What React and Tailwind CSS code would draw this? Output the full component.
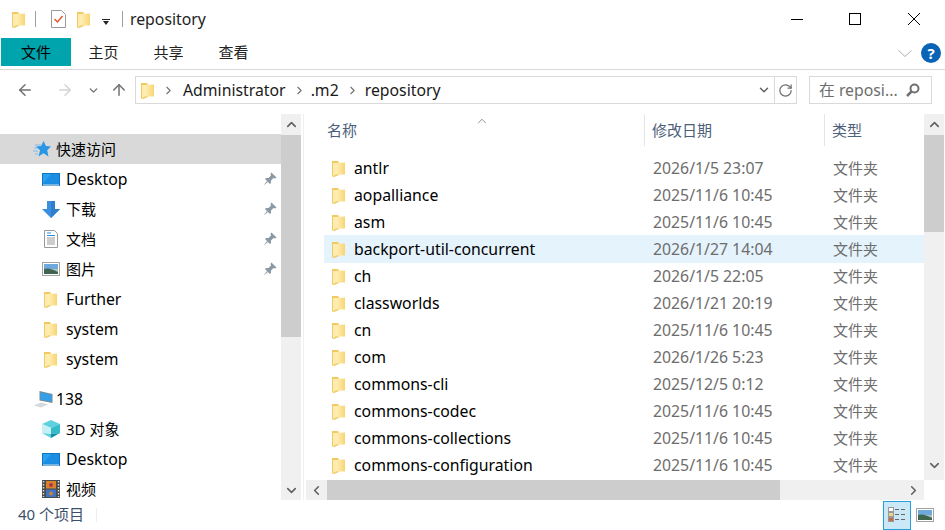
import { ChevronUp, ChevronDown, ChevronLeft, ChevronRight, ArrowLeft, ArrowRight, ArrowUp, RotateCw } from 'lucide-react'

const font = 'font-["Noto_Sans","Noto_Sans_CJK_SC",sans-serif]'

const files = [
    ['antlr', '2026/1/5 23:07'],
    ['aopalliance', '2025/11/6 10:45'],
    ['asm', '2025/11/6 10:45'],
    ['backport-util-concurrent', '2026/1/27 14:04', true],
    ['ch', '2026/1/5 22:05'],
    ['classworlds', '2026/1/21 20:19'],
    ['cn', '2025/11/6 10:45'],
    ['com', '2026/1/26 5:23'],
    ['commons-cli', '2025/12/5 0:12'],
    ['commons-codec', '2025/11/6 10:45'],
    ['commons-collections', '2025/11/6 10:45'],
    ['commons-configuration', '2025/11/6 10:45'],
]

function Folder({ className = '' }) {
    return (
        <svg viewBox="0 0 13 17" className={`w-[13px] h-[17px] shrink-0 ${className}`}>
            <defs>
                <linearGradient id="folderFront" x1="0" x2="1" y1="0" y2="0">
                    <stop offset="0" stopColor="#fff1bd" />
                    <stop offset="0.5" stopColor="#fde49a" />
                    <stop offset="1" stopColor="#f8d574" />
                </linearGradient>
            </defs>
            <path d="M0 1h6l1 1.500V15l-5 2H1l-1-1z" fill="#f1c95f" />
            <path d="M3 3 13 2.500V14.500H3z" fill="url(#folderFront)" />
            <path d="M1 3h2.500v11.500L1 16.500z" fill="#fdebb0" />
        </svg>
    )
}

function Pin() {
    return (
        <svg viewBox="0 0 14 14" className="w-[14px] h-[14px]">
            <path d="M8.500 0.500 13.500 5.500 12 6.500 10.500 6 8 8.500 8 11 7 12 2 7 3 6 5.500 6 8 3.500 7.500 2z" fill="#8b99a5" />
            <path d="M4 9 0.500 13.500 5 10z" fill="#8b99a5" />
        </svg>
    )
}

function DesktopIcon() {
    return (
        <svg viewBox="0 0 18 13" className="w-[18px] h-[13px]">
            <rect width="18" height="13" fill="#0d76c4" />
            <rect x="1" y="1" width="16" height="9.500" fill="#2ea0f0" />
            <path d="M1 10.500 9 1h8v9.500z" fill="#1b8ee4" />
            <rect x="1" y="11.500" width="16" height="1" fill="#e8f2fa" />
        </svg>
    )
}

function StarIcon() {
    return (
        <svg viewBox="0 0 18 16" className="w-[18px] h-[16px]">
            <path d="M2 4h6M1 7h5M0 10h5M2 13h3" stroke="#7fbdec" strokeWidth="1" />
            <path d="M10.500 0 13 5 18 5.500 14.200 9.300 15.500 15.500 10.500 12.300 5.500 15.500 7 9.300 3 5.500 8.200 5z" fill="#2c96e6" />
        </svg>
    )
}

function DownIcon() {
    return (
        <svg viewBox="0 0 18 17" className="w-[18px] h-[17px]">
            <path d="M5 0h8v8h5l-9 9-9-9h5z" fill="#3a8fdf" />
            <path d="M9 0h4v8h5l-9 9z" fill="#2f7fcd" />
        </svg>
    )
}

function DocIcon() {
    return (
        <svg viewBox="0 0 14 18" className="w-[14px] h-[18px]">
            <path d="M0.500 0.500h10l3 3v14h-13z" fill="#fff" stroke="#9a9a9a" />
            <path d="M3 3h4M3 5.500h8" stroke="#2c8fe0" />
            <path d="M3 8h8M3 10h8M3 12h8M3 14h8" stroke="#9a9a9a" />
        </svg>
    )
}

function PictureIcon({ className = 'w-[18px] h-[14px]' }) {
    return (
        <svg viewBox="0 0 18 14" className={className}>
            <rect x="0.500" y="0.500" width="17" height="13" fill="#fff" stroke="#a3a3a3" />
            <rect x="2" y="2" width="14" height="5" fill="#6fa8dc" />
            <rect x="2" y="7" width="14" height="5" fill="#a9c4bd" />
            <path d="M2 7c4-1.500 8 0 14 3v2H2z" fill="#3f6450" />
        </svg>
    )
}

function ComputerIcon() {
    return (
        <svg viewBox="0 0 20 18" className="w-[20px] h-[18px]">
            <path d="M0.500 15.500 8 12.500l7 2-7 3z" fill="#d5d9dc" />
            <path d="M6.500 1 19.500 4v9L6.500 10.500z" fill="#7a8a96" />
            <path d="M7.500 2.300 18.500 4.800v7L7.500 9.600z" fill="#35a0ea" />
        </svg>
    )
}

function CubeIcon() {
    return (
        <svg viewBox="0 0 18 18" className="w-[18px] h-[18px]">
            <path d="M9 0 18 4 9 8 0 4z" fill="#5fd0df" />
            <path d="M0 4 9 8v6L0 13z" fill="#c5f0f5" />
            <path d="M18 4 9 8v6l9-1z" fill="#35bccb" />
            <path d="M0 13 9 14v4z" fill="#5fd0df" />
            <path d="M18 13 9 14v4z" fill="#0f8ea6" />
        </svg>
    )
}

function VideoIcon() {
    return (
        <svg viewBox="0 0 18 18" className="w-[18px] h-[18px]">
            <rect width="18" height="18" fill="#4a4a4a" />
            <path d="M1.500 1v16M16.500 1v16" stroke="#d8d8d8" strokeWidth="1.500" strokeDasharray="1.500 1.500" />
            <rect x="4" y="1" width="10" height="7.500" fill="#d9822b" />
            <rect x="4" y="9.500" width="10" height="7.500" fill="#3d74c5" />
            <circle cx="9" cy="5" r="2" fill="#b1354a" />
            <circle cx="9" cy="13.500" r="2" fill="#c9803a" />
        </svg>
    )
}

function NavRow({ icon, label, pinned, active, head, cjk }) {
    return (
        <div className={`flex items-center h-[30px] shrink-0 ${head ? 'pl-[33px]' : 'pl-[42px]'} ${active ? 'bg-[#d9d9d9]' : ''}`}>
            <span className={head ? 'flex items-center w-[23px]' : 'flex items-center justify-center w-[24px] pr-[6px]'}>{icon}</span>
            <span className={`flex-1 text-black whitespace-nowrap ${cjk ? 'text-[15px]' : 'text-[15.8px] pt-[2px]'}`}>{label}</span>
            {pinned && <span className="mr-[4px] flex"><Pin /></span>}
        </div>
    )
}

function VScroll({ thumb, track }) {
    return (
        <div className="w-[20px] shrink-0 flex flex-col bg-[#f0f0f0]">
            <div className="h-[21px] flex items-center justify-center shrink-0"><ChevronUp size={15} strokeWidth={2.500} color="#606060" /></div>
            <div className={`${thumb} bg-[#cdcdcd] shrink-0`} />
            <div className="flex-1" />
            <div className={`${track} flex items-center justify-center shrink-0`}><ChevronDown size={15} strokeWidth={2.500} color="#606060" /></div>
        </div>
    )
}

function TitleBar() {
    return (
        <div className="h-[38px] flex items-center shrink-0">
            <Folder className="ml-[12px]" />
            <span className="w-px h-[16px] bg-[#a0a0a0] ml-[10px]" />
            <svg viewBox="0 0 15 18" className="w-[15px] h-[18px] ml-[15px]">
                <path d="M0.500 0.500h10l4 4v13h-14z" fill="#fff" stroke="#9a9a9a" />
                <path d="M3.500 9 6.500 12 11.500 6" fill="none" stroke="#e8562a" strokeWidth="1.500" />
            </svg>
            <Folder className="ml-[11px]" />
            <svg viewBox="0 0 8 6" className="w-[8px] h-[6px] ml-[12px] mt-[5px]">
                <path d="M0 0.500h8" stroke="#222" />
                <path d="M1 2h6L4 6z" fill="#222" />
            </svg>
            <span className="w-px h-[16px] bg-[#a0a0a0] ml-[12px]" />
            <span className="ml-[7px] text-[15.8px] text-[#222] pt-[2px]">repository</span>
            <div className="ml-auto flex items-center h-full">
                <svg viewBox="0 0 12 12" className="w-[12px] h-[12px] mr-[46px]"><path d="M0 6.500h12" stroke="#000" /></svg>
                <svg viewBox="0 0 12 12" className="w-[12px] h-[12px] mr-[47px]"><rect x="0.500" y="0.500" width="11" height="11" fill="none" stroke="#000" /></svg>
                <svg viewBox="0 0 12 12" className="w-[12px] h-[12px] mr-[25px]"><path d="M0 0 12 12M12 0 0 12" stroke="#000" /></svg>
            </div>
        </div>
    )
}

function Ribbon() {
    return (
        <div className="h-[32px] flex items-start pl-[1px] border-b border-[#d9d9d9] shrink-0 text-[15px]">
            <div className="w-[70px] h-[28px] bg-[#00a4ad] text-black flex items-center justify-center">文件</div>
            <div className="w-[65px] h-[28px] text-[#222] flex items-center justify-center">主页</div>
            <div className="w-[65px] h-[28px] text-[#222] flex items-center justify-center">共享</div>
            <div className="w-[65px] h-[28px] text-[#222] flex items-center justify-center">查看</div>
            <div className="ml-auto flex items-center h-[30px] mr-[4px]">
                <svg viewBox="0 0 14 7" className="w-[14px] h-[7px] mr-[9px]">
                    <path d="M0.500 0.500 7 6.500 13.500 0.500" fill="none" stroke="#b0b0b0" />
                </svg>
                <span className="w-[20px] h-[20px] rounded-full bg-[#0a63b5] text-white text-[15px] font-bold flex items-center justify-center">?</span>
            </div>
        </div>
    )
}

function NavBar() {
    return (
        <div className="h-[40px] flex items-center shrink-0">
            <ArrowLeft size={18} strokeWidth={2} color="#707070" className="ml-[16px]" />
            <ArrowRight size={18} strokeWidth={2} color="#d4d4d4" className="ml-[22px]" />
            <ChevronDown size={13} strokeWidth={2.500} color="#707070" className="ml-[13px]" />
            <ArrowUp size={18} strokeWidth={2} color="#707070" className="ml-[10px]" />
            <div className="ml-[7px] w-[662px] h-[28px] border border-[#d9d9d9] flex items-center text-[15.8px] text-[#1a1a1a]">
                <Folder className="ml-[5px]" />
                <ChevronRight size={13} strokeWidth={2} color="#707070" className="ml-[8px]" />
                <span className="ml-[8px] pt-[2px]">Administrator</span>
                <ChevronRight size={13} strokeWidth={2} color="#707070" className="ml-[7px]" />
                <span className="ml-[5px] pt-[2px]">.m2</span>
                <ChevronRight size={13} strokeWidth={2} color="#707070" className="ml-[7px]" />
                <span className="ml-[6px] pt-[2px]">repository</span>
                <ChevronDown size={14} strokeWidth={2.500} color="#606060" className="ml-auto mr-[3px]" />
                <span className="w-[22px] h-full border-l border-[#d9d9d9] flex items-center justify-center">
                    <RotateCw size={15} strokeWidth={2} color="#707070" />
                </span>
            </div>
            <div className="ml-[12px] w-[123px] h-[28px] border border-[#d9d9d9] flex items-center text-[15.8px] text-[#6d6d6d] pl-[9px]">
                <span className="pt-[2px]">在 reposi...</span>
                <svg viewBox="0 0 14 14" className="w-[14px] h-[14px] ml-auto mr-[11px]">
                    <circle cx="8.500" cy="5.500" r="4" fill="none" stroke="#707070" strokeWidth="2" />
                    <path d="M5.500 8.500 1 13" stroke="#707070" strokeWidth="2.500" />
                </svg>
            </div>
        </div>
    )
}

function Sidebar() {
    return (
        <div className="w-[281px] shrink-0 flex flex-col pt-[20px] overflow-hidden">
            <NavRow head active cjk icon={<StarIcon />} label="快速访问" />
            <NavRow icon={<DesktopIcon />} label="Desktop" pinned />
            <NavRow cjk icon={<DownIcon />} label="下载" pinned />
            <NavRow cjk icon={<DocIcon />} label="文档" pinned />
            <NavRow cjk icon={<PictureIcon />} label="图片" pinned />
            <NavRow icon={<Folder className="-ml-[2px]" />} label="Further" />
            <NavRow icon={<Folder className="-ml-[2px]" />} label="system" />
            <NavRow icon={<Folder className="-ml-[2px]" />} label="system" />
            <div className="h-[10px] shrink-0" />
            <NavRow head icon={<ComputerIcon />} label="138" />
            <NavRow cjk icon={<CubeIcon />} label="3D 对象" />
            <NavRow icon={<DesktopIcon />} label="Desktop" />
            <NavRow cjk icon={<VideoIcon />} label="视频" />
        </div>
    )
}

function FileList() {
    return (
        <div className="flex-1 min-w-0 flex flex-col overflow-hidden pl-[20px] relative">
            <ChevronUp size={14} strokeWidth={1.200} color="#606060" className="absolute left-[171px] top-0" />
            <div className="h-[32px] shrink-0 flex items-stretch text-[15px] text-[#4c607a] mb-[9px]">
                <div className="w-[321px] pl-[3px] flex items-center border-r border-[#e5e5e5]">名称</div>
                <div className="w-[180px] pl-[7px] flex items-center border-r border-[#e5e5e5]">修改日期</div>
                <div className="pl-[7px] flex items-center">类型</div>
            </div>
            {files.map(([name, date, selected]) => (
                <div key={name} className={`shrink-0 flex items-center text-[15.8px] ${selected ? 'h-[28px] -mt-px pt-px bg-[#e5f3fd]' : 'h-[27px]'}`}>
                    <div className="w-[321px] pl-[8px] flex items-center">
                        <Folder />
                        <span className="ml-[9px] text-black">{name}</span>
                    </div>
                    <div className="w-[180px] pl-[8px] text-[#6d6d6d]">{date}</div>
                    <div className="pl-[8px] text-[15px] text-[#6d6d6d]">文件夹</div>
                </div>
            ))}
        </div>
    )
}

function HScroll() {
    return (
        <div className="h-[20px] shrink-0 ml-[2px] mr-[21px] flex bg-[#f0f0f0]">
            <div className="w-[21px] flex items-center justify-center"><ChevronLeft size={15} strokeWidth={2.500} color="#606060" /></div>
            <div className="w-[453px] bg-[#cdcdcd]" />
            <div className="w-[132px] ml-auto flex items-center justify-end pr-[3px]"><ChevronRight size={15} strokeWidth={2.500} color="#606060" /></div>
        </div>
    )
}

function StatusBar() {
    return (
        <div className="h-[30px] shrink-0 flex items-center text-[15px] text-[#3d4f6b] pl-[18px]">
            <span className="pb-[2px]">40 个项目</span>
            <span className="w-px h-[14px] bg-[#eeeeee] ml-[12px]" />
            <div className="ml-auto h-full flex items-center mr-[11px]">
                <div className="w-[28px] h-[29px] border border-[#26a0da] bg-[#cbe8f6] flex items-center justify-center">
                    <svg viewBox="0 0 18 16" className="w-[18px] h-[16px]">
                        <rect x="0.500" y="0.500" width="5" height="4" fill="#fff" stroke="#999" />
                        <rect x="0.500" y="5.500" width="5" height="4" fill="#e8d98a" stroke="#999" />
                        <rect x="0.500" y="10.500" width="5" height="4" fill="#c9694a" stroke="#999" />
                        <path d="M7 2.500h4M13 2.500h4M7 7.500h4M13 7.500h4M7 12.500h4M13 12.500h4" stroke="#666" />
                    </svg>
                </div>
                <PictureIcon className="w-[18px] h-[14px] ml-[5px]" />
            </div>
        </div>
    )
}

export default function App() {
    return (
        <div className={`w-[945px] h-[530px] bg-white flex flex-col overflow-hidden ${font}`}>
            <TitleBar />
            <Ribbon />
            <NavBar />
            <div className="flex-1 min-h-0 flex pt-[4px]">
                <Sidebar />
                <VScroll thumb="h-[202px]" track="h-[20px]" />
                <div className="w-px ml-[2px] bg-[#f0f0f0] shrink-0" />
                <div className="flex-1 min-w-0 flex flex-col">
                    <div className="flex-1 min-h-0 flex pr-[1px]">
                        <FileList />
                        <VScroll thumb="h-[97px]" track="h-[30px]" />
                    </div>
                    <HScroll />
                </div>
            </div>
            <StatusBar />
        </div>
    )
}
